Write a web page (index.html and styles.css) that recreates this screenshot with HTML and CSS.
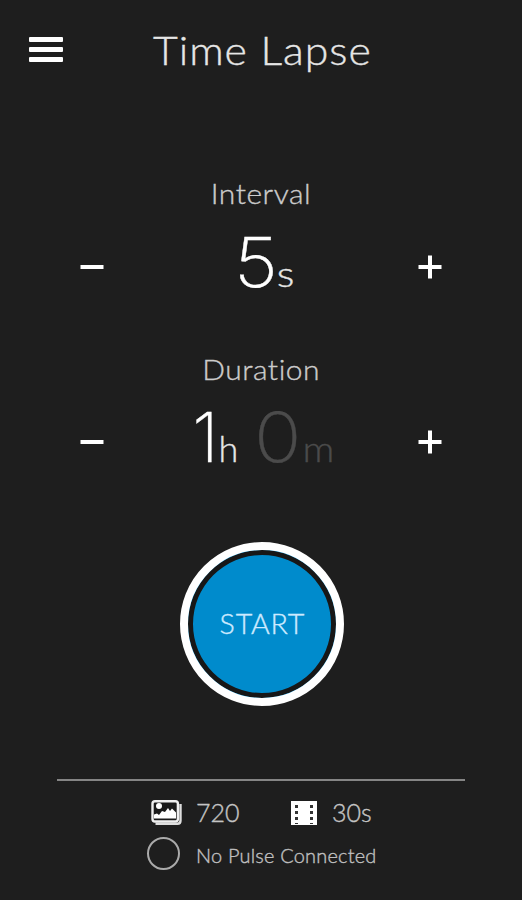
FILE: index.html
```html
<!DOCTYPE html>
<html lang="en">
<head>
<meta charset="utf-8">
<title>Time Lapse</title>
<link rel="stylesheet" href="styles.css">
</head>
<body>
<main class="screen">
  <header class="header">
    <button class="menu" aria-label="Menu"><span class="menu-bar"></span><span class="menu-bar"></span><span class="menu-bar"></span></button>
    <h1 class="title">Time Lapse</h1>
  </header>

  <section class="setting">
    <h2 class="label label-interval">Interval</h2>
    <div class="stepper">
      <button class="step" aria-label="Decrease interval"><svg width="24" height="24" viewBox="0 0 24 24"><path class="step-line" d="M0.5 12h23"/></svg></button>
      <div class="value value-interval"><span class="digit five">5</span><span class="unit seconds">s</span></div>
      <button class="step" aria-label="Increase interval"><svg width="24" height="24" viewBox="0 0 24 24"><path class="step-line" d="M0.5 12h23M12 0.5v23"/></svg></button>
    </div>
  </section>

  <section class="setting setting-duration">
    <h2 class="label label-duration">Duration</h2>
    <div class="stepper">
      <button class="step" aria-label="Decrease duration"><svg width="24" height="24" viewBox="0 0 24 24"><path class="step-line" d="M0.5 12h23"/></svg></button>
      <div class="value value-duration"><span class="digit hours">1</span><span class="unit">h</span><span class="digit minutes">0</span><span class="unit dim">m</span></div>
      <button class="step" aria-label="Increase duration"><svg width="24" height="24" viewBox="0 0 24 24"><path class="step-line" d="M0.5 12h23M12 0.5v23"/></svg></button>
    </div>
  </section>

  <button class="start"><span class="start-label">START</span></button>

  <footer class="footer">
    <div class="stats">
      <svg class="photo-icon" width="32" height="26" viewBox="0 0 32 26">
        <path d="M4.5 23.8h22q3 0 3-3V4" fill="none" stroke="#dedede" stroke-width="2.4"/>
        <rect x="1.5" y="1.3" width="25.4" height="20.2" rx="2.5" fill="#1a1a1a" stroke="#efefef" stroke-width="2.4"/>
        <circle cx="8" cy="6" r="3" fill="#fff"/>
        <path d="M3 18.5v-4l3-1 2 1.5 3-4 3 1 3-4 2 3 2-2.5 4 4v6z" fill="#fff"/>
      </svg>
      <span class="stat stat-photos">720</span>
      <svg class="film-icon" width="26" height="24" viewBox="0 0 26 24">
        <rect width="26" height="24" fill="#fff"/>
        <path d="M4 4h3v3H4zM4 10h3v3H4zM4 16h3v3H4zM4 22h3v1H4zM19 4h3v3h-3zM19 10h3v3h-3zM19 16h3v3h-3zM19 22h3v1h-3z" fill="#333"/>
      </svg>
      <span class="stat stat-length">30s</span>
    </div>
    <div class="connection">
      <span class="ring"></span>
      <span class="status">No Pulse Connected</span>
    </div>
  </footer>
</main>
</body>
</html>
```
FILE: styles.css
```css
* { box-sizing: border-box; }
body { margin: 0; background: #1e1e1e; color: #e6e6e6; font-family: Lato, "Liberation Sans", sans-serif; font-weight: 300; -webkit-text-stroke: 0.35px currentColor; }
button { padding: 0; border: 0; background: none; color: inherit; font: inherit; }
.screen { width: 522px; height: 900px; overflow: hidden; display: flex; flex-direction: column; align-items: center; }
.header { width: 100%; height: 100px; padding: 25px 0 0 29px; display: flex; align-items: flex-start; }
.menu { width: 34px; margin-top: 12px; display: flex; flex-direction: column; gap: 5px; }
.menu-bar { height: 5px; border-radius: 1px; background: #fff; }
.title { margin: 0 0 0 90px; font-size: 40px; line-height: 50px; font-weight: 300; letter-spacing: .9px; white-space: nowrap; transform: scaleX(1.07); transform-origin: left; }
.setting { width: 100%; height: 176px; padding-top: 73px; display: flex; flex-direction: column; align-items: center; }
.label { margin: 0; height: 47px; flex: none; font-size: 28px; line-height: 41px; font-weight: 300; color: #ccc; letter-spacing: .5px; transform: scaleX(1.07); }
.stepper { width: 362px; height: 94px; flex: none; display: flex; justify-content: space-between; align-items: center; }
.setting-duration .stepper { margin-top: -1px; }
.step { width: 24px; height: 24px; }
.step svg { display: block; }
.step-line { stroke: #fff; stroke-width: 4; fill: none; }
.value { display: flex; align-items: baseline; line-height: 84px; white-space: nowrap; }
.value-interval { margin-left: 8px; }
.value-duration { margin-left: 5px; }
.digit { font-family: Inter, sans-serif; font-size: 69px; font-weight: 200; color: #fff; }
.five { transform: scaleX(1.1); }
.unit { font-size: 36px; }
.seconds { margin-left: 2px; transform: scaleX(1.15); }
.hours { margin-left: -2px; }
.minutes { margin-left: 19px; color: #4b4b4b; transform: scaleX(1.14); }
.dim { margin-left: 5px; color: #4b4b4b; transform: scaleX(1.1); }
.start { flex: none; width: 164px; height: 164px; margin: 90px 0 0 1px; border: 8px solid #fff; border-radius: 50%; background: #008bcc; box-shadow: inset 0 0 0 5px #171717; display: flex; align-items: center; justify-content: center; }
.start-label { margin-left: 2px; font-size: 27px; line-height: 40px; color: #cceaff; letter-spacing: .7px; transform: scaleX(1.06); }
.footer { width: 408px; margin-top: 73px; border-top: 2px solid #858585; padding-top: 11px; }
.stats { height: 40px; padding-left: 94px; display: flex; align-items: center; }
.stat { font-size: 25px; line-height: 40px; color: #c4c4c4; }
.photo-icon, .film-icon { flex: none; margin-top: 1px; }
.stat-photos { width: 95px; margin-left: 13px; }
.stat-length { margin-left: 15px; }
.connection { height: 43px; padding-left: 90px; display: flex; align-items: center; }
.ring { width: 33px; height: 33px; border: 2px solid #aaa; border-radius: 50%; }
.status { margin: 3px 0 0 16px; font-size: 19px; color: #c0c0c0; letter-spacing: .2px; white-space: nowrap; transform: scaleX(1.05); transform-origin: left; }
```
